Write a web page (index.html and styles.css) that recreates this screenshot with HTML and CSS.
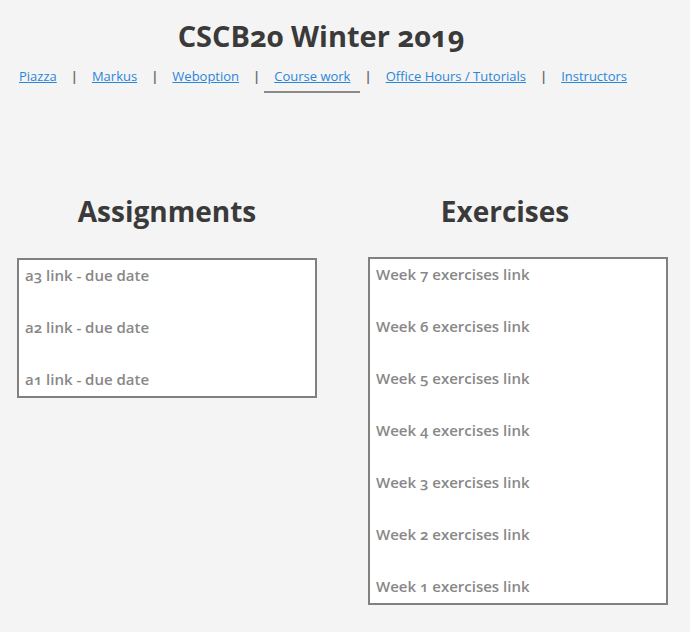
FILE: index.html
```html
<!DOCTYPE html>
<html lang="en">
<head>
<meta charset="utf-8">
<title>CSCB20 Winter 2019</title>
<link rel="stylesheet" href="styles.css">
</head>
<body>
<header class="site-header">
  <h1 class="site-title">CSCB20 Winter 2019</h1>
  <nav class="nav">
    <a class="nav-link" href="#">Piazza</a>
    <span class="nav-sep">|</span>
    <a class="nav-link" href="#">Markus</a>
    <span class="nav-sep">|</span>
    <a class="nav-link" href="#">Weboption</a>
    <span class="nav-sep">|</span>
    <a class="nav-link active" href="#">Course work</a>
    <span class="nav-sep">|</span>
    <a class="nav-link" href="#">Office Hours / Tutorials</a>
    <span class="nav-sep">|</span>
    <a class="nav-link" href="#">Instructors</a>
  </nav>
</header>
<main class="columns">
  <section class="col col-left">
    <h2 class="col-title">Assignments</h2>
    <ul class="box">
      <li class="item">a3 link - due date</li>
      <li class="item">a2 link - due date</li>
      <li class="item">a1 link - due date</li>
    </ul>
  </section>
  <section class="col col-right">
    <h2 class="col-title">Exercises</h2>
    <ul class="box">
      <li class="item">Week 7 exercises link</li>
      <li class="item">Week 6 exercises link</li>
      <li class="item">Week 5 exercises link</li>
      <li class="item">Week 4 exercises link</li>
      <li class="item">Week 3 exercises link</li>
      <li class="item">Week 2 exercises link</li>
      <li class="item">Week 1 exercises link</li>
    </ul>
  </section>
</main>
</body>
</html>
```
FILE: styles.css
```css
html, body {
  margin: 0;
  padding: 0;
  background: #f4f4f4;
}
body {
  font-family: "Open Sans", "Noto Sans", sans-serif;
  font-variant-numeric: oldstyle-nums;
  color: #3a3a3a;
}
.site-header {
  padding-top: 16px;
}
.site-title {
  margin: 0;
  width: 642px;
  text-align: center;
  font-size: 29px;
  line-height: 40px;
  font-weight: 700;
  color: #3a3a3a;
}
.nav {
  display: flex;
  align-items: flex-start;
  padding-left: 9px;
  margin-top: 10px;
  font-size: 13px;
  line-height: 20px;
}
.nav-link {
  color: #2b86d8;
  text-decoration: underline;
  padding: 0 10px 5px;
  border-bottom: 2px solid transparent;
}
.nav-link.active {
  border-bottom-color: #8a8a8a;
}
.nav-sep {
  color: #6f6f6f;
  font-weight: 700;
  padding: 0 4px;
}
.columns {
  display: grid;
  grid-template-columns: 334px 334px;
  column-gap: 4px;
  margin-top: 98px;
}
.col-title {
  margin: 0;
  text-align: center;
  font-size: 28px;
  line-height: 40px;
  font-weight: 700;
  color: #3a3a3a;
}
.box {
  list-style: none;
  margin: 27px 0 0;
  padding: 0 6px 2px;
  box-sizing: content-box;
  width: 284px;
  background: #fff;
  border: 2px solid #808080;
}
.col-left .box {
  margin-left: 17px;
}
.col-right .box {
  margin-left: 30px;
  margin-top: 26px;
}
.item {
  font-size: 15px;
  line-height: 30px;
  font-weight: 600;
  color: #888;
  margin-bottom: 22px;
}
.item:last-child {
  margin-bottom: 0;
}
```
